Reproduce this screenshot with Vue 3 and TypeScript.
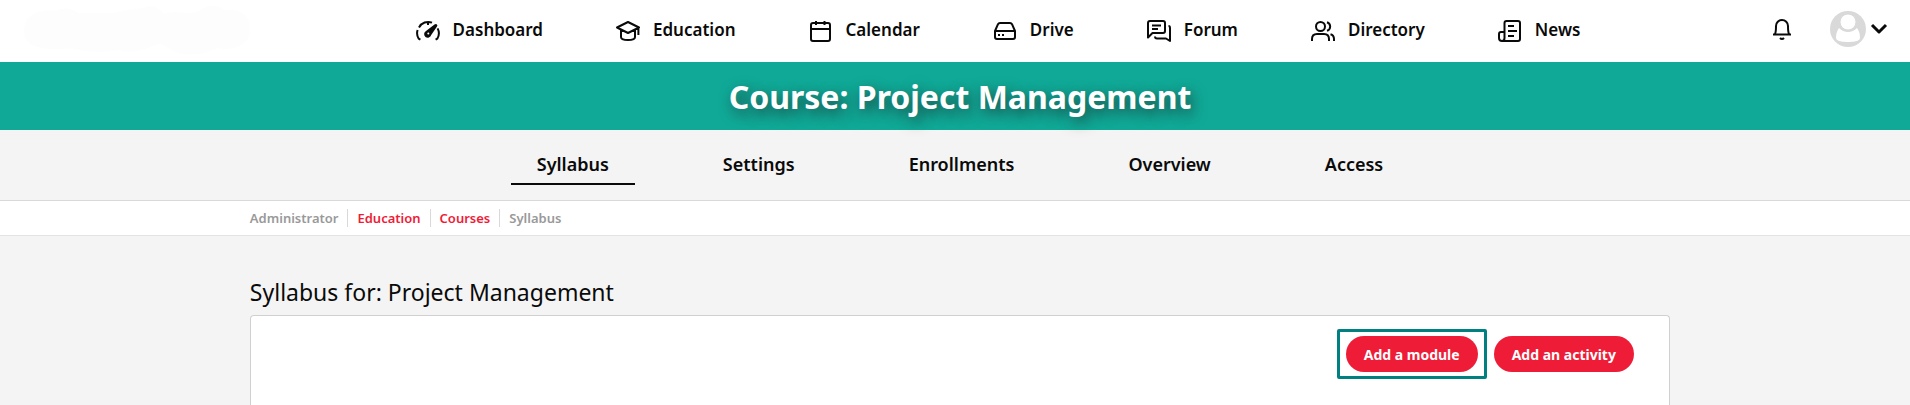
<script setup lang="ts">
interface NavItem { label: string; icon: string }

const navItems: NavItem[] = [
  { label: 'Dashboard', icon: 'dashboard' },
  { label: 'Education', icon: 'education' },
  { label: 'Calendar', icon: 'calendar' },
  { label: 'Drive', icon: 'drive' },
  { label: 'Forum', icon: 'forum' },
  { label: 'Directory', icon: 'directory' },
  { label: 'News', icon: 'news' },
]

const tabs: string[] = ['Syllabus', 'Settings', 'Enrollments', 'Overview', 'Access']
const activeTab = 'Syllabus'

const crumbs: { label: string; link: boolean }[] = [
  { label: 'Administrator', link: false },
  { label: 'Education', link: true },
  { label: 'Courses', link: true },
  { label: 'Syllabus', link: false },
]
</script>

<template>
  <div class="page">
    <header class="topbar">
      <svg class="brand" viewBox="0 0 228 50" aria-hidden="true">
        <path d="M0 25C0 8 16 3 32 5C40 1 48 2 54 7H88C104 4 111 3 119 2C127-2 135 1 140 8C153 3 164 10 175 5C184-2 193-1 201 4C219 2 228 12 226 26C224 40 208 45 194 42C180 48 166 51 152 46C143 43 142 38 134 38C124 42 109 49 94 44C81 47 58 46 46 42C29 44 0 45 0 25Z" />
      </svg>
      <nav class="main-nav" aria-label="Main">
        <a v-for="item in navItems" :key="item.label" class="nav-link" href="#">
          <svg class="icon" viewBox="0 0 24 24" aria-hidden="true">
            <template v-if="item.icon === 'dashboard'">
              <path d="M4.4 19.6L2.6 18.6A10.5 10.5 0 0 1 1.6 10M3 7.4A10.5 10.5 0 0 1 16 2.6M12 2V5M21.6 8.4A10.5 10.5 0 0 1 21.4 18.6L19.6 19.6" />
              <path class="solid" d="M20.6 4.2Q22 5 21 6.6L15.2 15A3.6 3.6 0 1 1 10 10.9L18.5 4.5Q19.7 3.6 20.6 4.2Z" />
              <circle class="hole" cx="12.3" cy="13.4" r="1" />
            </template>
            <template v-else-if="item.icon === 'education'">
              <path d="M1 7.5L12 2L23 7.5L12 13ZM5 10V17Q5 20 12 20Q19 20 19 17V10M22.4 8V15" />
            </template>
            <template v-else-if="item.icon === 'calendar'">
              <rect x="2" y="3" width="19" height="18" rx="2" />
              <path d="M2 9H21M7 1V5M15.5 1V5" />
            </template>
            <template v-else-if="item.icon === 'drive'">
              <path d="M2 11L5 4.2Q5.6 3 7 3H17Q18.4 3 19 4.2L22 11V17Q22 19 20 19H4Q2 19 2 17ZM2 11H22" />
              <path d="M5 15H7M9 15H11" />
            </template>
            <template v-else-if="item.icon === 'forum'">
              <path d="M1 17.5V3Q1 1 3 1H16Q18 1 18 3V11Q18 13 16 13H5.5ZM5 5.5H14M5 9H11M21.5 6Q23 6 23 8V21L19 18.5H10Q8 18.5 8 16.5" />
            </template>
            <template v-else-if="item.icon === 'directory'">
              <circle cx="9.5" cy="6.5" r="4.5" />
              <path d="M1 21V19Q1 14 6 14H13Q18 14 18 19V21M16 2.2A4.5 4.5 0 0 1 16 10.8M19.5 14.2Q23 15.2 23 19V21" />
            </template>
            <template v-else>
              <path d="M6.5 18V3Q6.5 1 8.5 1H20Q22 1 22 3V19Q22 21 20 21H4Q1 21 1 18V14Q1 12 3 12H6.5M6.5 18Q6.5 21 4 21M10 6H16M10 11H19M10 16H16" />
            </template>
          </svg>
          <span>{{ item.label }}</span>
        </a>
      </nav>
      <div class="user-tools">
        <button class="tool bell" type="button" aria-label="Notifications">
          <svg viewBox="0 0 20 24" aria-hidden="true">
            <path d="M1 17.5H19M3 17Q4 15 4 9A6 6 0 0 1 16 9Q16 15 17 17M8 21Q10 23.2 12 21" />
          </svg>
        </button>
        <button class="tool account" type="button" aria-label="Account menu">
          <svg class="avatar" viewBox="0 0 36 36" aria-hidden="true">
            <circle cx="18" cy="18" r="18" fill="#d9d9d9" />
            <path d="M9 17Q6 21 6 27Q6 31 18 31Q30 31 30 27Q30 21 27 17Q23 21 18 21Q13 21 9 17Z" fill="#fff" />
            <circle cx="18" cy="11" r="8" fill="#fff" stroke="#d9d9d9" />
          </svg>
          <svg class="chevron" viewBox="0 0 18 12" aria-hidden="true"><path d="M2 2L9 9L16 2" /></svg>
        </button>
      </div>
    </header>

    <div class="banner"><h1>Course: Project Management</h1></div>

    <nav class="tabs" aria-label="Course">
      <a
        v-for="tab in tabs"
        :key="tab"
        href="#"
        class="tab"
        :class="{ active: tab === activeTab }"
        :aria-current="tab === activeTab ? 'page' : undefined"
      >{{ tab }}</a>
    </nav>

    <nav class="breadcrumb" aria-label="Breadcrumb">
      <ol class="container">
        <li v-for="crumb in crumbs" :key="crumb.label">
          <a v-if="crumb.link" href="#">{{ crumb.label }}</a>
          <span v-else>{{ crumb.label }}</span>
        </li>
      </ol>
    </nav>

    <main class="container">
      <h2>Syllabus for: Project Management</h2>
      <section class="card">
        <button type="button" class="pill highlighted">Add a module</button>
        <button type="button" class="pill">Add an activity</button>
      </section>
    </main>
  </div>
</template>

<style>
body {
  margin: 0;
  background: #f4f4f4;
}
</style>

<style scoped>
.page {
  display: flex;
  flex-direction: column;
  min-height: 100vh;
  font-family: "Noto Sans", "Open Sans", sans-serif;
  color: #0a0a0a;
}
a {
  color: inherit;
  text-decoration: none;
}
.topbar {
  display: grid;
  grid-template-columns: 1fr auto 1fr;
  align-items: center;
  height: 62px;
  padding-left: 24px;
  background: #fff;
}
.brand {
  width: 228px;
  height: 50px;
  fill: #fdfdfd;
}
.main-nav {
  display: flex;
  gap: 73px;
  padding-left: 62px;
}
.nav-link {
  display: flex;
  align-items: center;
  gap: 13px;
  font-size: 17px;
  font-weight: 600;
  line-height: 24px;
}
.nav-link span {
  margin-bottom: 2px;
}
.icon {
  width: 24px;
  height: 24px;
  margin-top: 2px;
}
.icon,
.bell svg,
.chevron {
  fill: none;
  stroke: #0a0a0a;
  stroke-width: 2;
  stroke-linejoin: round;
}
.icon .solid {
  fill: #0a0a0a;
  stroke: none;
}
.icon .hole {
  fill: #fff;
  stroke: none;
}
.user-tools {
  display: flex;
  justify-content: flex-end;
  align-items: center;
  gap: 38px;
  padding-right: 22px;
}
.tool {
  display: flex;
  align-items: center;
  padding: 0 0 4px;
  border: 0;
  background: none;
}
.bell svg {
  width: 20px;
  height: 24px;
}
.account {
  gap: 4px;
}
.avatar {
  width: 36px;
  height: 36px;
}
.chevron {
  width: 18px;
  height: 12px;
  stroke-width: 3;
}
.banner {
  padding: 13px 0 11px 10px;
  background: #10a997;
  text-align: center;
}
h1 {
  margin: 0;
  color: #fff;
  font-size: 32px;
  font-weight: 700;
  line-height: 44px;
  text-shadow: 3px 5px 14px rgba(32, 32, 32, 0.7);
}
.tabs {
  display: flex;
  justify-content: center;
  gap: 62px;
  padding: 17px 0 15px 10px;
  border-bottom: 1px solid #d9d9d9;
}
.tab {
  padding: 4px 26px 6px;
  border-bottom: 2px solid transparent;
  font-size: 18px;
  font-weight: 600;
  line-height: 26px;
}
.tab.active {
  border-color: #0a0a0a;
}
.container {
  box-sizing: border-box;
  width: 74.35%;
  margin: 0 12.57% 0 auto;
}
.breadcrumb {
  border-bottom: 1px solid #e3e3e3;
  background: #fff;
}
.breadcrumb ol {
  display: flex;
  padding: 8px 0;
  list-style: none;
  color: #999;
  font-size: 13px;
  font-weight: 600;
  line-height: 18px;
}
.breadcrumb li + li {
  margin-left: 9px;
  padding-left: 9px;
  border-left: 1px solid #d9d9d9;
}
.breadcrumb a {
  color: #ee1c36;
}
main {
  display: flex;
  flex: 1;
  flex-direction: column;
}
h2 {
  margin: 0;
  padding: 40px 0 7px;
  font-size: 23px;
  font-weight: 400;
  line-height: 32px;
}
.card {
  display: flex;
  flex: 1;
  justify-content: flex-end;
  align-items: flex-start;
  gap: 16px;
  padding: 20px 35px 32px;
  border: 1px solid #d0d0d0;
  border-bottom: 0;
  border-radius: 4px 4px 0 0;
  background: #fff;
}
.pill {
  position: relative;
  height: 36px;
  padding: 0 18px;
  border: 0;
  border-radius: 18px;
  background: #ee1c36;
  color: #fff;
  font-family: inherit;
  font-size: 14px;
  font-weight: 700;
}
.highlighted::after {
  content: "";
  position: absolute;
  inset: -7px -9px;
  border: 3px solid #008080;
  border-radius: 2px;
}
</style>
